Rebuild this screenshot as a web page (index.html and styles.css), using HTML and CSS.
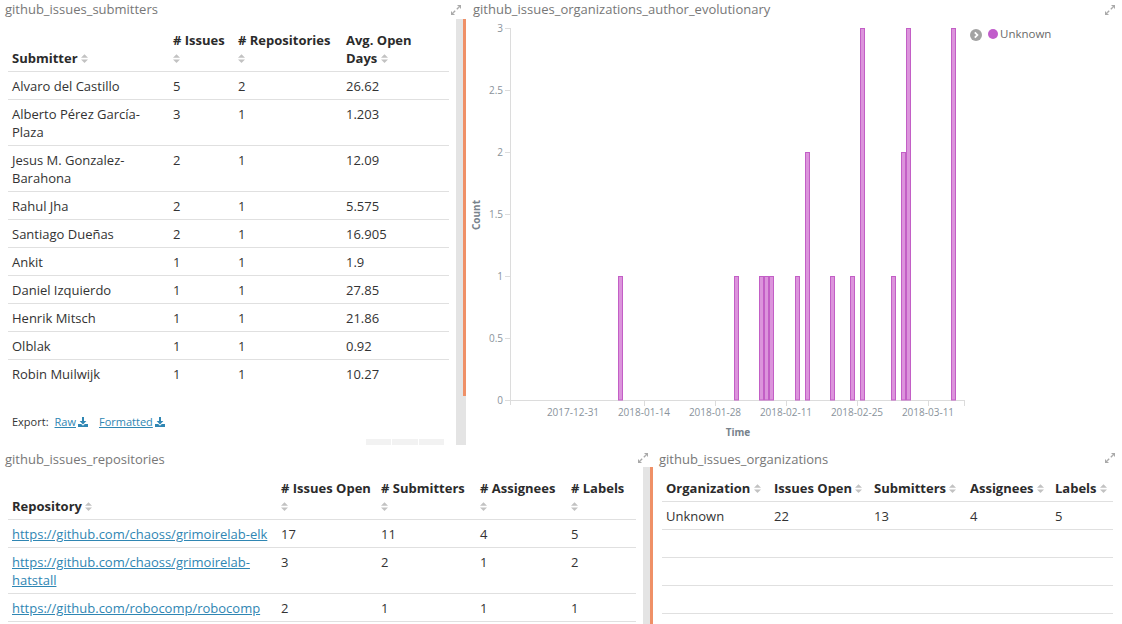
FILE: index.html
```html
<!DOCTYPE html>
<html>
<head>
<meta charset="utf-8">
<link rel="stylesheet" href="styles.css">
</head>
<body>
<div class="dash">
  <div class="row row-top">
    <section class="panel panel-sub">
      <header class="panel-head">
        <span class="panel-title">github_issues_submitters</span>
        <svg class="expand" viewBox="0 0 10 10"><path d="M2.2 7.8 L4.2 5.8 M5.8 4.2 L7.8 2.2" stroke="#a9a9a9" stroke-width="1.3"/><polygon points="0,10 0,6 4,10" fill="#a9a9a9"/><polygon points="10,0 6,0 10,4" fill="#a9a9a9"/></svg>
      </header>
      <div class="panel-body">
        <div class="panel-content">
          <table class="tbl tbl-sub">
            <colgroup><col style="width:161px"><col style="width:65px"><col style="width:108px"><col style="width:107px"></colgroup>
            <thead>
              <tr>
                <th>Submitter <svg class="sort" viewBox="0 0 8 12"><polygon points="0,5 4,1 8,5"/><polygon points="0,7 4,11 8,7"/></svg></th>
                <th># Issues <span class="sort-line"><svg class="sort" viewBox="0 0 8 12"><polygon points="0,5 4,1 8,5"/><polygon points="0,7 4,11 8,7"/></svg></span></th>
                <th># Repositories <span class="sort-line"><svg class="sort" viewBox="0 0 8 12"><polygon points="0,5 4,1 8,5"/><polygon points="0,7 4,11 8,7"/></svg></span></th>
                <th>Avg. Open<br>Days <svg class="sort" viewBox="0 0 8 12"><polygon points="0,5 4,1 8,5"/><polygon points="0,7 4,11 8,7"/></svg></th>
              </tr>
            </thead>
            <tbody>
              <tr><td>Alvaro del Castillo</td><td>5</td><td>2</td><td>26.62</td></tr>
              <tr><td>Alberto Pérez García-Plaza</td><td>3</td><td>1</td><td>1.203</td></tr>
              <tr><td>Jesus M. Gonzalez-Barahona</td><td>2</td><td>1</td><td>12.09</td></tr>
              <tr><td>Rahul Jha</td><td>2</td><td>1</td><td>5.575</td></tr>
              <tr><td>Santiago Dueñas</td><td>2</td><td>1</td><td>16.905</td></tr>
              <tr><td>Ankit</td><td>1</td><td>1</td><td>1.9</td></tr>
              <tr><td>Daniel Izquierdo</td><td>1</td><td>1</td><td>27.85</td></tr>
              <tr><td>Henrik Mitsch</td><td>1</td><td>1</td><td>21.86</td></tr>
              <tr><td>Olblak</td><td>1</td><td>1</td><td>0.92</td></tr>
              <tr><td>Robin Muilwijk</td><td>1</td><td>1</td><td>10.27</td></tr>
            </tbody>
          </table>
          <div class="export">
            <span>Export:</span>
            <a class="dl">Raw</a><svg class="dl-icon" viewBox="0 0 10 10"><rect x="4" y="0" width="2" height="4.5"/><polygon points="1.6,4 8.4,4 5,7.6"/><path d="M0 7 H3.2 L5 8.8 L6.8 7 H10 V10 H0 Z"/></svg>
            <a class="dl dl-2">Formatted</a><svg class="dl-icon" viewBox="0 0 10 10"><rect x="4" y="0" width="2" height="4.5"/><polygon points="1.6,4 8.4,4 5,7.6"/><path d="M0 7 H3.2 L5 8.8 L6.8 7 H10 V10 H0 Z"/></svg>
          </div>
          <div class="pager"><span class="pg pg-a"></span><span class="pg pg-b"></span><span class="pg pg-a"></span></div>
        </div>
        <div class="strip"><div class="thumb thumb-top"></div></div>
      </div>
    </section>

    <section class="panel panel-chart">
      <header class="panel-head">
        <span class="panel-title">github_issues_organizations_author_evolutionary</span>
        <svg class="expand" viewBox="0 0 10 10"><path d="M2.2 7.8 L4.2 5.8 M5.8 4.2 L7.8 2.2" stroke="#a9a9a9" stroke-width="1.3"/><polygon points="0,10 0,6 4,10" fill="#a9a9a9"/><polygon points="10,0 6,0 10,4" fill="#a9a9a9"/></svg>
      </header>
      <div class="chart-body">
        <svg class="chart" width="502" height="426" viewBox="0 0 502 426">
          <g class="axis">
            <line x1="44.5" y1="9" x2="44.5" y2="386"/>
            <line x1="44.5" y1="381.5" x2="499" y2="381.5"/>
            <line x1="39" y1="9.5" x2="44.5" y2="9.5"/>
            <line x1="39" y1="71.5" x2="44.5" y2="71.5"/>
            <line x1="39" y1="133.5" x2="44.5" y2="133.5"/>
            <line x1="39" y1="195.5" x2="44.5" y2="195.5"/>
            <line x1="39" y1="257.5" x2="44.5" y2="257.5"/>
            <line x1="39" y1="319.5" x2="44.5" y2="319.5"/>
            <line x1="39" y1="381.5" x2="44.5" y2="381.5"/>
            <line x1="178.5" y1="381.5" x2="178.5" y2="387"/>
            <line x1="249.5" y1="381.5" x2="249.5" y2="387"/>
            <line x1="320.5" y1="381.5" x2="320.5" y2="387"/>
            <line x1="391.5" y1="381.5" x2="391.5" y2="387"/>
            <line x1="462.5" y1="381.5" x2="462.5" y2="387"/>
            <line x1="498.5" y1="381.5" x2="498.5" y2="387"/>
          </g>
          <g class="ticks-y">
            <text x="37" y="13">3</text>
            <text x="37" y="75">2.5</text>
            <text x="37" y="137">2</text>
            <text x="37" y="199">1.5</text>
            <text x="37" y="261">1</text>
            <text x="37" y="323">0.5</text>
            <text x="37" y="385">0</text>
          </g>
          <g class="ticks-x">
            <text x="107" y="397">2017-12-31</text>
            <text x="178" y="397">2018-01-14</text>
            <text x="249" y="397">2018-01-28</text>
            <text x="320" y="397">2018-02-11</text>
            <text x="391" y="397">2018-02-25</text>
            <text x="462" y="397">2018-03-11</text>
          </g>
          <text class="axis-title" x="272" y="417">Time</text>
          <text class="axis-title" transform="translate(14 196) rotate(-90)">Count</text>
          <g class="bars">
            <rect x="152.5" y="257.5" width="4" height="123.5"/>
            <rect x="268.5" y="257.5" width="4" height="123.5"/>
            <rect x="293.5" y="257.5" width="4" height="123.5"/>
            <rect x="298.5" y="257.5" width="4" height="123.5"/>
            <rect x="303.5" y="257.5" width="4" height="123.5"/>
            <rect x="329.5" y="257.5" width="4" height="123.5"/>
            <rect x="339.5" y="133.5" width="4" height="247.5"/>
            <rect x="364.5" y="257.5" width="4" height="123.5"/>
            <rect x="384.5" y="257.5" width="4" height="123.5"/>
            <rect x="394.5" y="9.5" width="4" height="371.5"/>
            <rect x="425.5" y="257.5" width="4" height="123.5"/>
            <rect x="435.5" y="133.5" width="4" height="247.5"/>
            <rect x="440.5" y="9.5" width="4" height="371.5"/>
            <rect x="485.5" y="9.5" width="4" height="371.5"/>
          </g>
        </svg>
        <div class="legend">
          <div class="legend-item">
            <svg class="legend-toggle" viewBox="0 0 12 12"><circle cx="6" cy="6" r="6" fill="#a3a3a3"/><path d="M4.8 3.3 L7.4 6 L4.8 8.7" fill="none" stroke="#fff" stroke-width="1.8"/></svg>
            <span class="legend-dot"></span>
            <span class="legend-label">Unknown</span>
          </div>
        </div>
      </div>
    </section>
  </div>

  <div class="row row-bottom">
    <section class="panel panel-repo">
      <header class="panel-head">
        <span class="panel-title">github_issues_repositories</span>
        <svg class="expand" viewBox="0 0 10 10"><path d="M2.2 7.8 L4.2 5.8 M5.8 4.2 L7.8 2.2" stroke="#a9a9a9" stroke-width="1.3"/><polygon points="0,10 0,6 4,10" fill="#a9a9a9"/><polygon points="10,0 6,0 10,4" fill="#a9a9a9"/></svg>
      </header>
      <div class="panel-body">
        <div class="panel-content">
          <table class="tbl tbl-repo">
            <colgroup><col style="width:269px"><col style="width:100px"><col style="width:99px"><col style="width:91px"><col style="width:69px"></colgroup>
            <thead>
              <tr>
                <th>Repository <svg class="sort" viewBox="0 0 8 12"><polygon points="0,5 4,1 8,5"/><polygon points="0,7 4,11 8,7"/></svg></th>
                <th># Issues Open <span class="sort-line"><svg class="sort" viewBox="0 0 8 12"><polygon points="0,5 4,1 8,5"/><polygon points="0,7 4,11 8,7"/></svg></span></th>
                <th># Submitters <span class="sort-line"><svg class="sort" viewBox="0 0 8 12"><polygon points="0,5 4,1 8,5"/><polygon points="0,7 4,11 8,7"/></svg></span></th>
                <th># Assignees <span class="sort-line"><svg class="sort" viewBox="0 0 8 12"><polygon points="0,5 4,1 8,5"/><polygon points="0,7 4,11 8,7"/></svg></span></th>
                <th># Labels <span class="sort-line"><svg class="sort" viewBox="0 0 8 12"><polygon points="0,5 4,1 8,5"/><polygon points="0,7 4,11 8,7"/></svg></span></th>
              </tr>
            </thead>
            <tbody>
              <tr><td><a class="link">https://github.com/chaoss/grimoirelab-elk</a></td><td>17</td><td>11</td><td>4</td><td>5</td></tr>
              <tr><td><a class="link">https://github.com/chaoss/grimoirelab-hatstall</a></td><td>3</td><td>2</td><td>1</td><td>2</td></tr>
              <tr><td><a class="link">https://github.com/robocomp/robocomp</a></td><td>2</td><td>1</td><td>1</td><td>1</td></tr>
              <tr><td>&nbsp;</td><td></td><td></td><td></td><td></td></tr>
            </tbody>
          </table>
        </div>
        <div class="strip"><div class="thumb thumb-full"></div></div>
      </div>
    </section>

    <section class="panel panel-org">
      <header class="panel-head">
        <span class="panel-title">github_issues_organizations</span>
        <svg class="expand" viewBox="0 0 10 10"><path d="M2.2 7.8 L4.2 5.8 M5.8 4.2 L7.8 2.2" stroke="#a9a9a9" stroke-width="1.3"/><polygon points="0,10 0,6 4,10" fill="#a9a9a9"/><polygon points="10,0 6,0 10,4" fill="#a9a9a9"/></svg>
      </header>
      <div class="panel-body">
        <div class="panel-content">
          <table class="tbl tbl-org">
            <colgroup><col style="width:108px"><col style="width:100px"><col style="width:96px"><col style="width:85px"><col style="width:62px"></colgroup>
            <thead>
              <tr>
                <th>Organization <svg class="sort" viewBox="0 0 8 12"><polygon points="0,5 4,1 8,5"/><polygon points="0,7 4,11 8,7"/></svg></th>
                <th>Issues Open <svg class="sort" viewBox="0 0 8 12"><polygon points="0,5 4,1 8,5"/><polygon points="0,7 4,11 8,7"/></svg></th>
                <th>Submitters <svg class="sort" viewBox="0 0 8 12"><polygon points="0,5 4,1 8,5"/><polygon points="0,7 4,11 8,7"/></svg></th>
                <th>Assignees <svg class="sort" viewBox="0 0 8 12"><polygon points="0,5 4,1 8,5"/><polygon points="0,7 4,11 8,7"/></svg></th>
                <th>Labels <svg class="sort" viewBox="0 0 8 12"><polygon points="0,5 4,1 8,5"/><polygon points="0,7 4,11 8,7"/></svg></th>
              </tr>
            </thead>
            <tbody>
              <tr><td>Unknown</td><td>22</td><td>13</td><td>4</td><td>5</td></tr>
              <tr><td>&nbsp;</td><td></td><td></td><td></td><td></td></tr>
              <tr><td>&nbsp;</td><td></td><td></td><td></td><td></td></tr>
              <tr><td>&nbsp;</td><td></td><td></td><td></td><td></td></tr>
              <tr><td>&nbsp;</td><td></td><td></td><td></td><td></td></tr>
            </tbody>
          </table>
        </div>
      </div>
    </section>
  </div>
</div>
</body>
</html>
```

FILE: styles.css
```css
* { box-sizing: border-box; margin: 0; padding: 0; }
html, body { width: 1122px; height: 624px; overflow: hidden; background: #fff; }
body { font-family: "Open Sans", "DejaVu Sans", sans-serif; font-size: 13px; color: #333; }

.dash { display: flex; flex-direction: column; width: 1122px; height: 624px; }
.row { display: flex; overflow: hidden; }
.row-top { height: 445px; flex: none; }
.row-bottom { height: 179px; flex: none; }

.panel { display: flex; flex-direction: column; overflow: hidden; }
.panel-sub { width: 466px; }
.panel-chart { flex: 1; }
.panel-repo { width: 653px; }
.panel-org { flex: 1; }

.panel-head { display: flex; align-items: center; justify-content: space-between; height: 19px; flex: none; }
.row-bottom .panel-head { height: 24px; padding-top: 4px; }
.panel-title { font-size: 13px; line-height: 19px; color: #777; white-space: nowrap; }
.expand { width: 10px; height: 10px; flex: none; }
.row-bottom .expand { margin-top: -2px; }

.panel-sub .panel-head { padding: 0 5px 0 5px; }
.panel-chart .panel-head { padding: 0 7px 0 7px; }
.panel-repo .panel-head { padding-left: 5px; padding-right: 5px; }
.panel-org .panel-head { padding-left: 6px; padding-right: 7px; }

.panel-body { display: flex; flex: 1; min-height: 0; }
.panel-content { flex: 1; min-width: 0; padding: 7px 7px 0 8px; }
.row-bottom .panel-content { padding-top: 5px; }
.panel-org .panel-content { padding-left: 9px; padding-right: 9px; }

.strip { width: 10px; flex: none; background: #e4e4e4; display: flex; justify-content: flex-end; align-items: flex-start; }
.row-bottom .strip { margin-top: -2px; }
.thumb { width: 3px; background: #ef9067; }
.thumb-top { height: 377px; }
.thumb-full { height: 100%; }

/* tables */
.tbl { border-collapse: separate; border-spacing: 0; table-layout: fixed; width: 100%; }
.tbl th, .tbl td { padding: 5px 4px 4px; line-height: 18px; text-align: left; vertical-align: top; font-size: 13px; }
.tbl th { font-weight: 700; color: #2b2b2b; vertical-align: bottom; }
.tbl td { border-top: 1px solid #e0e0e0; color: #333; }
.sort { width: 7px; height: 11px; fill: #c2c2c2; vertical-align: -1px; }
.sort-line { display: block; height: 18px; }
.sort-line .sort { vertical-align: -1px; }

.link { color: #2f86b3; text-decoration: underline; }

.export { display: flex; align-items: center; margin-top: 26px; padding-left: 4px; font-size: 11px; line-height: 18px; color: #333; }
.dl { color: #2f86b3; text-decoration: underline; margin-left: 6px; }
.dl-2 { margin-left: 11px; }
.dl-icon { width: 10px; height: 10px; fill: #2f86b3; margin-left: 2px; }

.pager { display: flex; justify-content: flex-end; gap: 1px; margin-top: 8px; padding-right: 5px; }
.pg { display: block; height: 12px; background: #f2f2f2; }
.pg-a { width: 25px; }
.pg-b { width: 26px; }

/* chart */
.chart-body { display: flex; flex: 1; min-height: 0; }
.chart { display: block; flex: none; }
.axis line { stroke: #dcdcdc; stroke-width: 1; }
.ticks-y text { font-family: "Open Sans", sans-serif; font-size: 10px; fill: #8a939b; text-anchor: end; }
.ticks-x text { font-family: "Open Sans", sans-serif; font-size: 10px; fill: #8a939b; text-anchor: middle; }
.axis-title { font-family: "Open Sans", sans-serif; font-size: 10px; font-weight: 700; fill: #77828c; text-anchor: middle; }
.bars rect { fill: #dc94dc; stroke: #c35fc6; stroke-width: 1; }

.legend { flex: 1; padding: 8px 0 0 2px; }
.legend-item { display: flex; align-items: center; height: 14px; }
.legend-toggle { width: 12px; height: 12px; flex: none; margin-top: 2px; }
.legend-dot { width: 10px; height: 10px; border-radius: 50%; background: #c15ccb; margin-left: 6px; }
.legend-label { font-size: 11.5px; color: #6a6a6a; margin-left: 2px; line-height: 14px; }
```
